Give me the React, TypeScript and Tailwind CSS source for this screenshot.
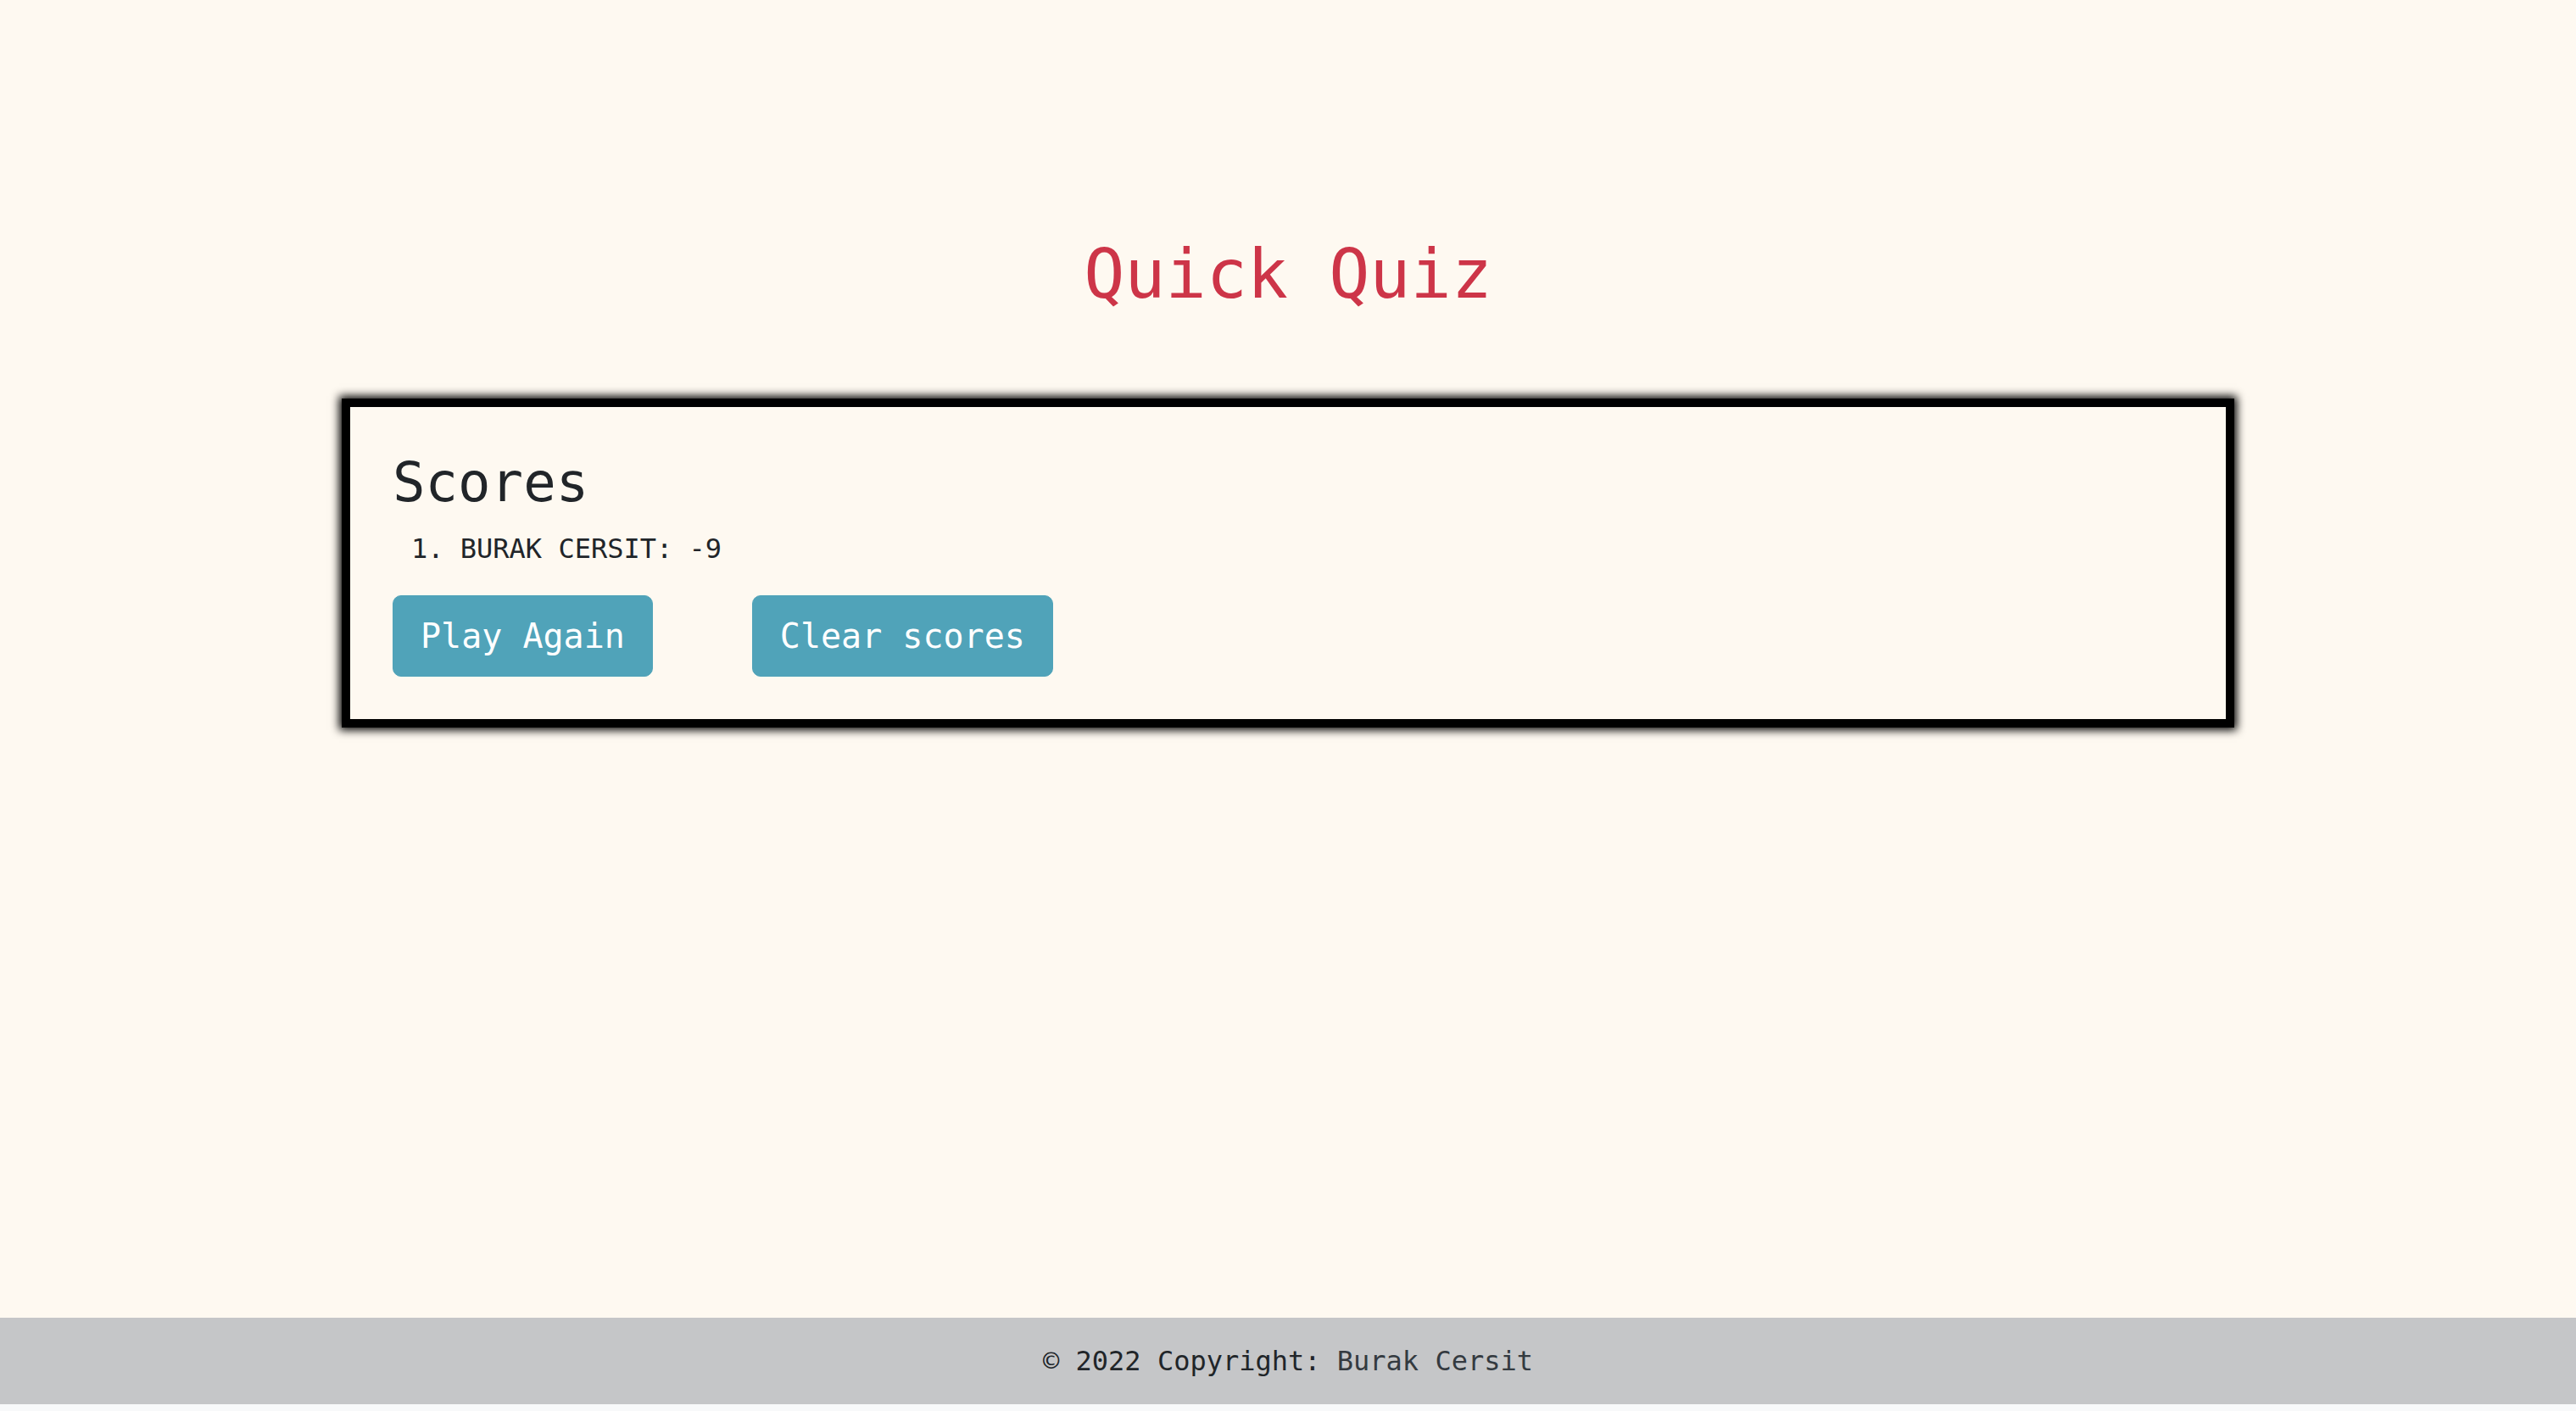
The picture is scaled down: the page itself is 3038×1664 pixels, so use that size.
import React from 'react';

const scores = [{ name: 'BURAK CERSIT', score: -9 }];

export default function App() {
  return (
    <div className="min-h-screen bg-[#f8f9fa] text-[#212529] font-['DejaVu_Sans_Mono',monospace]">
      <div className="h-[1656px] flex flex-col">
        {/* Main */}
        <main className="flex-1 bg-[#fef9f1] pt-[276px]">
          <h1 className="text-center text-[80px] leading-[1.2] font-normal text-[#cd3548] mb-[98px]">Quick Quiz</h1>

          <div className="w-[2232px] mx-auto border-[10px] border-black shadow-[0_0_10px_3px_#000] bg-[#fef9f1] pl-[50px] pr-[50px] pt-[51px] pb-[50px]">
            <h2 className="text-[64px] leading-[1.2] font-normal mb-[15px]">Scores</h2>
            <ol className="list-decimal list-inside pl-[22px] text-[32px] leading-[1.5] mb-[31px]">
              {scores.map((s) => (
                <li key={s.name}>
                  {s.name}: {s.score}
                </li>
              ))}
            </ol>
            <div className="flex gap-[117px]">
              <button
                type="button"
                className="bg-[#50a3b9] text-white text-[40px] leading-[1.5] px-[32px] py-[17px] border border-[#50a3b9] rounded-[10px]"
              >
                Play Again
              </button>
              <button
                type="button"
                className="bg-[#50a3b9] text-white text-[40px] leading-[1.5] px-[32px] py-[17px] border border-[#50a3b9] rounded-[10px]"
              >
                Clear scores
              </button>
            </div>
          </div>
        </main>

        {/* Footer */}
        <footer className="h-[102px] bg-[#c5c6c8] flex items-center justify-center text-[32px] leading-[1.5]">
          <span>
            © 2022 Copyright: <span className="text-[#343a40]">Burak Cersit</span>
          </span>
        </footer>
      </div>
    </div>
  );
}
